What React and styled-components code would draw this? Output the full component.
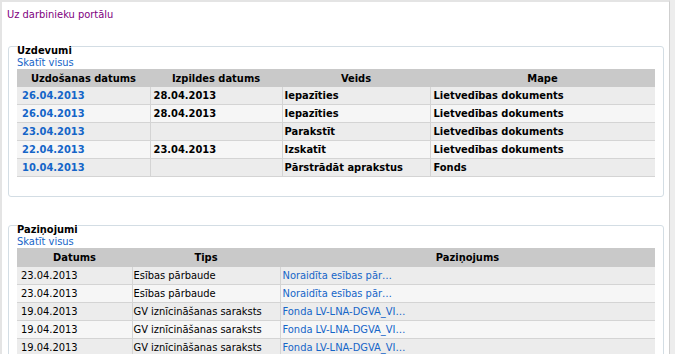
import React from "react";
import styled, { createGlobalStyle } from "styled-components";

const Global = createGlobalStyle`
  html, body { margin: 0; padding: 0; height: 100%; overflow: hidden; background: #ededed; }
  body { font-family: "DejaVu Sans Condensed", "DejaVu Sans", sans-serif; font-size: 11px; color: #000; }
`;

const Panel = styled.div`
  box-sizing: border-box;
  width: 670px;
  min-height: 354px;
  background: #fff;
  border-top: 2px solid #e4e4e4;
  border-left: 2px solid #e4e4e4;
  border-right: 1px solid #cfcfcf;
  padding: 6px 5px 0 6px;
`;

const BackLink = styled.a`
  display: block;
  margin-left: -1px;
  line-height: 14px;
  color: #800080;
  text-decoration: none;
  margin-bottom: ${(p) => p.$gap}px;
`;

const Section = styled.fieldset`
  margin: 0 0 ${(p) => p.$after}px 0;
  padding: 0 8px ${(p) => p.$bottom}px 8px;
  border: 1px solid #d3dde4;
  border-radius: 3px;
  min-width: 0;
`;

const Legend = styled.legend`
  padding: 9px 0 0 0;
  margin-left: 0;
  font-weight: bold;
  line-height: 13px;
`;

const ViewAll = styled.a`
  display: block;
  line-height: 12px;
  color: #1565c8;
  text-decoration: none;
`;

const Table = styled.table`
  width: 638px;
  border-collapse: collapse;
  table-layout: fixed;
`;

const Head = styled.th`
  background: #c9c9c9;
  font-weight: bold;
  text-align: center;
  height: ${(p) => p.$h}px;
  padding: 0;
  line-height: 13px;
`;

const Row = styled.tr`
  background: ${(p) => (p.$alt ? "#f6f6f6" : "#ececec")};
`;

const Cell = styled.td`
  height: 17px;
  padding: 0 0 0 ${(p) => p.$pad ?? 2}px;
  border: 1px solid #d4d4d4;
  border-top: none;
  font-weight: ${(p) => (p.$bold ? "bold" : "normal")};
  color: ${(p) => (p.$link ? "#1565c8" : "#000")};
  white-space: nowrap;
  overflow: hidden;
  line-height: 13px;
  &:first-child { border-left: none; }
  &:last-child { border-right: none; }
`;

const tasks = [
  ["26.04.2013", "28.04.2013", "Iepazīties", "Lietvedības dokuments"],
  ["26.04.2013", "28.04.2013", "Iepazīties", "Lietvedības dokuments"],
  ["23.04.2013", "", "Parakstīt", "Lietvedības dokuments"],
  ["22.04.2013", "23.04.2013", "Izskatīt", "Lietvedības dokuments"],
  ["10.04.2013", "", "Pārstrādāt aprakstus", "Fonds"],
];

const notes = [
  ["23.04.2013", "Esības pārbaude", "Noraidīta esības pār…"],
  ["23.04.2013", "Esības pārbaude", "Noraidīta esības pār…"],
  ["19.04.2013", "GV iznīcināšanas saraksts", "Fonda LV-LNA-DGVA_VI…"],
  ["19.04.2013", "GV iznīcināšanas saraksts", "Fonda LV-LNA-DGVA_VI…"],
  ["19.04.2013", "GV iznīcināšanas saraksts", "Fonda LV-LNA-DGVA_VI…"],
];

export default function App() {
  return (
    <>
      <Global />
      <Panel>
        <BackLink href="#" $gap={13}>Uz darbinieku portālu</BackLink>

        <Section $bottom={19} $after={17}>
          <Legend>Uzdevumi</Legend>
          <ViewAll href="#">Skatīt visus</ViewAll>
          <Table>
            <colgroup>
              <col style={{ width: 133 }} />
              <col style={{ width: 132 }} />
              <col style={{ width: 148 }} />
              <col style={{ width: 225 }} />
            </colgroup>
            <thead>
              <tr>
                <Head $h={18}>Uzdošanas datums</Head>
                <Head $h={18}>Izpildes datums</Head>
                <Head $h={18}>Veids</Head>
                <Head $h={18}>Mape</Head>
              </tr>
            </thead>
            <tbody>
              {tasks.map((r, i) => (
                <Row key={i} $alt={i % 2 === 1}>
                  <Cell $bold $link $pad={5}>{r[0]}</Cell>
                  <Cell $bold $pad={3}>{r[1]}</Cell>
                  <Cell $bold $pad={2}>{r[2]}</Cell>
                  <Cell $bold $pad={3}>{r[3]}</Cell>
                </Row>
              ))}
            </tbody>
          </Table>
        </Section>

        <Section $bottom={18} $after={0}>
          <Legend>Paziņojumi</Legend>
          <ViewAll href="#">Skatīt visus</ViewAll>
          <Table>
            <colgroup>
              <col style={{ width: 115 }} />
              <col style={{ width: 148 }} />
              <col style={{ width: 375 }} />
            </colgroup>
            <thead>
              <tr>
                <Head $h={19}>Datums</Head>
                <Head $h={19}>Tips</Head>
                <Head $h={19}>Paziņojums</Head>
              </tr>
            </thead>
            <tbody>
              {notes.map((r, i) => (
                <Row key={i} $alt={i % 2 === 1}>
                  <Cell $pad={4}>{r[0]}</Cell>
                  <Cell $pad={1}>{r[1]}</Cell>
                  <Cell $link $pad={2}>{r[2]}</Cell>
                </Row>
              ))}
            </tbody>
          </Table>
        </Section>
      </Panel>
    </>
  );
}
